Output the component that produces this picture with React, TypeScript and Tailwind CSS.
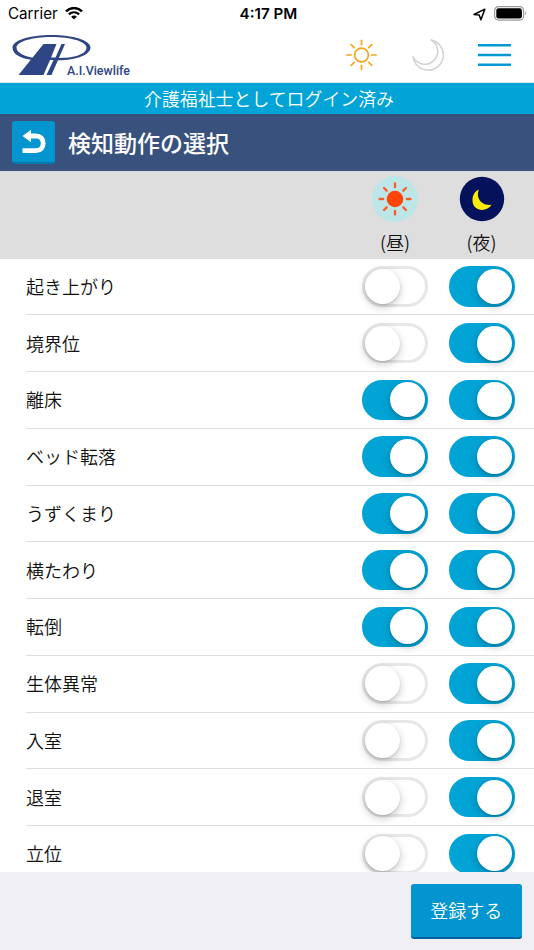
import { useState } from "react";

type Row = { label: string; day: boolean; night: boolean };

const initialRows: Row[] = [
  { label: "起き上がり", day: false, night: true },
  { label: "境界位", day: false, night: true },
  { label: "離床", day: true, night: true },
  { label: "ベッド転落", day: true, night: true },
  { label: "うずくまり", day: true, night: true },
  { label: "横たわり", day: true, night: true },
  { label: "転倒", day: true, night: true },
  { label: "生体異常", day: false, night: true },
  { label: "入室", day: false, night: true },
  { label: "退室", day: false, night: true },
  { label: "立位", day: false, night: true },
];

const rayAngles = [0, 45, 90, 135, 180, 225, 270, 315];

function StatusBar() {
  return (
    <div className="grid h-7 shrink-0 grid-cols-3 items-center font-['Inter','Liberation_Sans',sans-serif] text-black">
      <div className="flex items-center gap-[7px] pl-2">
        <span className="text-[15.2px] leading-7">Carrier</span>
        <svg className="-mt-px h-[13px] w-[18px]" viewBox="0 0 18 13" fill="none" stroke="#000">
          <path d="M1 4.300C5.600 0 12.400 0 17 4.300" strokeWidth="2.500" />
          <path d="M3.900 7.400C6.900 4.700 11.100 4.700 14.100 7.400" strokeWidth="2.300" />
          <path d="M6.100 9.700C7.700 8.100 10.300 8.100 11.900 9.700L9 12.600Z" fill="#000" stroke="none" />
        </svg>
      </div>
      <div className="pl-[3px] text-center text-[15.2px] leading-7 font-semibold">4:17 PM</div>
      <div className="flex items-center justify-end gap-2 pr-[6px]">
        <svg className="h-[13px] w-[13px]" viewBox="0 0 13 13" fill="none" stroke="#000" strokeWidth="1.500" strokeLinejoin="round">
          <path d="M11.800 1.200 1 6.500 6.200 7 7.900 11.700Z" />
        </svg>
        <svg className="-mt-px h-[15px] w-[34px]" viewBox="0 0 34 15">
          <rect x=".6" y=".6" width="29" height="13.500" rx="4" fill="none" stroke="#999" strokeWidth="1.200" />
          <rect x="2.300" y="2.300" width="25.600" height="10.200" rx="2.300" />
          <path d="M31.300 5.200Q33.300 7.200 31.300 9.300Z" fill="#999" />
        </svg>
      </div>
    </div>
  );
}

function Logo() {
  return (
    <svg className="h-[44px] w-[122px]" viewBox="0 0 122 44" fill="#2f4685">
      <path
        fillRule="evenodd"
        d="M40.500 2C62 2 79.500 7.200 79.500 14.600S65 27.500 46 27.300L47 25C64 25.300 75.500 21 75.500 14.600C75.500 8.500 60 3.900 40.500 3.900S5.500 8.500 5.500 14.600C5.500 20 14 23.800 23 25L21.500 27C10 25.800 1.500 21.500 1.500 14.600C1.500 7.200 19 2 40.500 2Z"
      />
      <path d="M32.500 11H44L26.500 42H7.500Z" transform="translate(0 0)" />
      <path d="M37 11H45.500L40 24.500H44.500L50.500 11H54L40.500 42H35.500L42.500 27H39L32.500 42H22Z" />
      <text x="56" y="42" fontFamily="Roboto, Inter, sans-serif" fontSize="12.500" fontWeight="500" textLength="63" lengthAdjust="spacingAndGlyphs">
        A.I.Viewlife
      </text>
    </svg>
  );
}

function Header() {
  return (
    <header className="flex h-[55px] shrink-0 items-center border-b border-[#dcebef] pl-[11px] pr-[23px]">
      <Logo />
      <div className="ml-auto flex items-center pb-px">
        <svg className="mr-[34px] h-8 w-8" viewBox="-15.500 -16 32 32" fill="none" stroke="#faa51e" strokeWidth="1.700" strokeLinecap="round">
          <circle r="6.900" />
          {rayAngles.map((a) => (
            <path key={a} d="M0-10.300V-14.600" transform={`rotate(${a})`} />
          ))}
        </svg>
        <svg className="mr-[34px] h-8 w-8" viewBox="0 0 32 32" fill="none" stroke="#d2d2d2" strokeWidth="1.500" strokeLinejoin="round">
          <path d="M19 1A15.200 15.200 0 1 1 1 17.500A12.900 12.900 0 1 0 19 1Z" />
        </svg>
        <svg aria-label="メニュー" className="h-6 w-[33px]" viewBox="0 0 33 24" stroke="#0799d2" strokeWidth="2.500">
          <path d="M0 2.300H33M0 12H33M0 21.700H33" />
        </svg>
      </div>
    </header>
  );
}

function DayIcon() {
  return (
    <svg className="h-[46px] w-[46px]" viewBox="-23 -23 46 46">
      <circle r="23" fill="#bce6e7" />
      <circle r="8.300" fill="#ff4508" />
      {rayAngles.map((a) => (
        <path key={a} d="M0-11.800V-15.500" transform={`rotate(${a})`} stroke="#ff5b27" strokeWidth="2.300" strokeLinecap="round" />
      ))}
    </svg>
  );
}

function NightIcon() {
  return (
    <svg className="h-[46px] w-[46px]" viewBox="0 0 46 46">
      <circle cx="23" cy="23" r="22.200" fill="#04125c" />
      <path d="M20 13.500C17 19 20 30 32.500 28.800C28 36.500 13.500 36 13.500 24C13.500 19 16 15 20 13.500Z" fill="#ffeb05" />
    </svg>
  );
}

function Toggle({ on, label, onChange }: { on: boolean; label: string; onChange: () => void }) {
  return (
    <button
      role="switch"
      aria-checked={on}
      aria-label={label}
      onClick={onChange}
      className={
        "flex h-[40.500px] w-[66px] shrink-0 items-center rounded-full border-[3px] " +
        (on ? "justify-end border-[#02a4d5] bg-[#02a4d5]" : "border-[#e7e7e7] bg-white")
      }
    >
      <span className="size-[35px] rounded-full bg-white shadow-[0_3px_8px_rgba(0,0,0,0.22),0_1px_2px_rgba(0,0,0,0.12)]" />
    </button>
  );
}

export default function App() {
  const [rows, setRows] = useState(initialRows);
  const flip = (index: number, key: "day" | "night") =>
    setRows(rows.map((r, i) => (i === index ? { ...r, [key]: !r[key] } : r)));

  return (
    <div className="flex h-[950px] w-[534px] flex-col overflow-hidden bg-white font-['Noto_Sans_CJK_JP',sans-serif] text-[#111]">
      <StatusBar />
      <Header />
      <div className="flex h-[31px] shrink-0 items-center justify-center bg-[#02a4d7] pl-[4px] text-[17.900px] font-[350] text-white">
        介護福祉士としてログイン済み
      </div>
      <div className="flex h-[56.500px] shrink-0 items-center bg-[#38517d] pl-3">
        <button aria-label="戻る" className="flex h-[43px] w-[43px] items-center justify-center rounded-[3px] border-b-2 border-[#0278ad] bg-[#0395d0]">
          <svg className="h-6 w-6 overflow-visible" viewBox="0 0 24 24" fill="none">
            <path d="M6 7H14C18.500 7 21.200 10 21.200 14.300S18.500 21.700 14 21.700H.500" stroke="#fff" strokeWidth="4.800" />
            <path d="M9 .700V13.300L.500 7Z" fill="#fff" />
          </svg>
        </button>
        <h1 className="ml-[13px] text-[23px] leading-none font-medium text-white">検知動作の選択</h1>
      </div>
      <div className="flex h-[88px] shrink-0 justify-end gap-[20.500px] bg-[#dedede] pt-[5.500px] pr-[19.500px] text-[18px]">
        <div className="flex w-[66px] flex-col items-center">
          <DayIcon />
          <span className="mt-[7px] leading-[26px] font-[350]">(昼)</span>
        </div>
        <div className="flex w-[66px] flex-col items-center">
          <NightIcon />
          <span className="mt-[7px] leading-[26px] font-[350]">(夜)</span>
        </div>
      </div>
      <main className="h-[613.500px] shrink-0 overflow-hidden pl-[26px]">
        {rows.map((row, i) => (
          <div key={row.label} className="flex h-[56.750px] items-center gap-[20.500px] border-b border-[#dedede] pr-[19.500px]">
            <span className="flex-1 text-[18px] font-[350]">{row.label}</span>
            <Toggle on={row.day} label={`${row.label} 昼`} onChange={() => flip(i, "day")} />
            <Toggle on={row.night} label={`${row.label} 夜`} onChange={() => flip(i, "night")} />
          </div>
        ))}
      </main>
      <footer className="flex h-[78px] shrink-0 justify-end bg-[#efeff4] pt-3 pr-[12.500px]">
        <button className="h-[54.500px] w-[110.500px] rounded-[3px] border-b-2 border-[#0263a0] bg-[#0395d0] text-[18px] font-[350] text-white">
          登録する
        </button>
      </footer>
    </div>
  );
}
